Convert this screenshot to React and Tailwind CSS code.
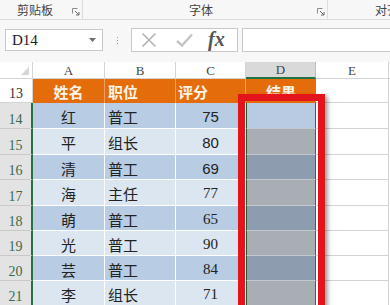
import React from "react";

const rows = [
  { n: 14, name: "红", pos: "普工", score: "75", h: "h-[26px]", blue: true, d: "bg-[#B8CBE3]", serif: false },
  { n: 15, name: "平", pos: "组长", score: "80", h: "h-[26px]", blue: false, d: "bg-[#A9AEB4]", serif: false },
  { n: 16, name: "清", pos: "普工", score: "69", h: "h-[25px]", blue: true, d: "bg-[#8E9CAF]", serif: false },
  { n: 17, name: "海", pos: "主任", score: "77", h: "h-[26px]", blue: false, d: "bg-[#A9AEB4]", serif: true },
  { n: 18, name: "萌", pos: "普工", score: "65", h: "h-[25px]", blue: true, d: "bg-[#8E9CAF]", serif: true },
  { n: 19, name: "光", pos: "普工", score: "90", h: "h-[25px]", blue: false, d: "bg-[#A9AEB4]", serif: true },
  { n: 20, name: "芸", pos: "普工", score: "84", h: "h-[25px]", blue: true, d: "bg-[#8E9CAF]", serif: true },
  { n: 21, name: "李", pos: "组长", score: "71", h: "h-[25px]", blue: false, d: "bg-[#A9AEB4]", serif: true },
];

function Launcher({ className = "" }) {
  return (
    <svg width="8" height="8" viewBox="0 0 8 8" className={className}>
      <path d="M0.5 0.5H5.5M0.5 0.5V5.5" stroke="#8A8A8A" strokeWidth="1" fill="none" />
      <path d="M3 3L7 7M7 4V7H4" stroke="#6A6A6A" strokeWidth="1" fill="none" />
    </svg>
  );
}

export default function App() {
  return (
    <div className="w-[390px] h-[305px] overflow-hidden relative bg-white font-['Noto_Sans_CJK_SC',sans-serif]">
      {/* Ribbon group labels */}
      <div className="h-[20px] flex bg-[#F7F7F7] border-b border-[#DCDCDC] text-[12px] text-[#444] leading-none whitespace-nowrap">
        <div className="w-[83px] flex items-center border-r border-[#DCDCDC] shrink-0">
          <span className="ml-[17px]">剪贴板</span>
          <Launcher className="ml-[19px] mt-[4px]" />
        </div>
        <div className="w-[245px] flex items-center border-r border-[#DCDCDC] shrink-0">
          <span className="ml-[106px]">字体</span>
          <Launcher className="ml-[104px] mt-[4px]" />
        </div>
        <div className="flex items-center shrink-0">
          <span className="ml-[47px] whitespace-nowrap">对齐</span>
        </div>
      </div>

      {/* Formula bar */}
      <div className="h-[42px] bg-[#F7F7F7] flex items-start pt-[8px]">
        <div className="ml-[5px] mt-[1px] w-[98px] h-[22px] bg-white border border-[#C8C8C8] flex items-center shrink-0">
          <span className="ml-[6px] text-[15px] text-[#222] font-['Liberation_Serif',serif] leading-none">D14</span>
          <svg width="7" height="4" viewBox="0 0 7 4" className="ml-auto mr-[6px]">
            <path d="M0 0H7L3.5 4Z" fill="#6E6E6E" />
          </svg>
        </div>
        <div className="ml-[14px] mt-[9px] flex flex-col gap-[2px] shrink-0">
          <div className="w-[1px] h-[1px] bg-[#9A9A9A]" />
          <div className="w-[1px] h-[1px] bg-[#9A9A9A]" />
          <div className="w-[1px] h-[1px] bg-[#9A9A9A]" />
        </div>
        <div className="ml-[13px] w-[107px] h-[24px] bg-white border border-[#C8C8C8] flex items-center shrink-0">
          <svg width="16" height="16" viewBox="0 0 16 16" className="ml-[9px]">
            <path d="M1.5 1.5L14.5 14.5M14.5 1.5L1.5 14.5" stroke="#B4B4B4" strokeWidth="1.6" fill="none" />
          </svg>
          <svg width="17" height="14" viewBox="0 0 17 14" className="ml-[19px]">
            <path d="M1 8L6 12.5L16 1.5" stroke="#C4C4C4" strokeWidth="2.4" fill="none" />
          </svg>
          <span className="ml-[15px] text-[20px] italic font-bold text-[#555] font-['Liberation_Serif',serif] leading-none -mt-[2px]">fx</span>
        </div>
        <div className="ml-[4px] flex-1 h-[24px] bg-white border border-r-0 border-[#C8C8C8]" />
      </div>

      {/* Column headers */}
      <div className="h-[17px] flex bg-white border-b border-[#D4D4D4] text-[13px] text-[#444] font-['Liberation_Serif',serif] leading-none">
        <div className="w-[33px] shrink-0 border-r border-[#D4D4D4] relative">
          <svg width="8" height="8" viewBox="0 0 8 8" className="absolute right-[3px] bottom-[3px]">
            <path d="M8 0V8H0Z" fill="#D6D6D6" />
          </svg>
        </div>
        <div className="w-[72px] shrink-0 border-r border-[#D4D4D4] flex items-center justify-center">A</div>
        <div className="w-[71px] shrink-0 border-r border-[#D4D4D4] flex items-center justify-center">B</div>
        <div className="w-[70px] shrink-0 border-r border-[#D4D4D4] flex items-center justify-center">C</div>
        <div className="w-[70px] shrink-0 border-r border-[#BDBDBD] bg-[#D9D9D9] flex items-center justify-center border-b-2 border-b-[#217346] -mb-[1px]">D</div>
        <div className="w-[73px] shrink-0 border-r border-[#D4D4D4] flex items-center justify-center">E</div>
        <div className="flex-1" />
      </div>

      {/* Row 13 header */}
      <div className="h-[24px] flex">
        <div className="w-[33px] shrink-0 bg-white border-r border-b border-[#D4D4D4] flex items-end justify-center pb-[1px] text-[14px] text-[#333] font-['Liberation_Serif',serif] leading-none">13</div>
        <div className="w-[72px] shrink-0 bg-[#E46C0A] border-r border-[#F2A060] flex items-center justify-center text-[15px] font-bold text-[#FFF4E8] leading-none">姓名</div>
        <div className="w-[71px] shrink-0 bg-[#E46C0A] border-r border-[#F2A060] flex items-center pl-[3px] text-[15px] font-bold text-[#FFF4E8] leading-none">职位</div>
        <div className="w-[70px] shrink-0 bg-[#E46C0A] border-r border-[#F2A060] flex items-center pl-[2px] text-[15px] font-bold text-[#FFF4E8] leading-none">评分</div>
        <div className="w-[70px] shrink-0 bg-[#E46C0A] flex items-center justify-center text-[15px] font-bold text-[#FFF4E8] leading-none">结果</div>
        <div className="w-[73px] shrink-0 border-r border-b border-[#D4D4D4]" />
        <div className="flex-1" />
      </div>

      {/* Data rows */}
      {rows.map((r) => {
        const bg = r.blue ? "bg-[#B8CCE4]" : "bg-[#DCE6F1]";
        const num = r.serif ? "font-['Liberation_Serif',serif]" : "font-['Liberation_Sans',sans-serif]";
        return (
          <div key={r.n} className={`${r.h} flex`}>
            <div className="w-[33px] shrink-0 bg-[#E3E3E3] border-b border-[#C9C9C9] border-r-2 border-r-[#217346] flex items-end justify-center pb-[1px] text-[14px] text-[#3A6A4C] font-['Liberation_Serif',serif] leading-none">
              {r.n}
            </div>
            <div className={`w-[72px] shrink-0 ${bg} border-r border-b border-white flex items-center justify-center pt-[2px] text-[15px] text-[#222] leading-none`}>{r.name}</div>
            <div className={`w-[71px] shrink-0 ${bg} border-r border-b border-white flex items-center pl-[3px] pt-[2px] text-[15px] text-[#222] leading-none`}>{r.pos}</div>
            <div className={`w-[70px] shrink-0 ${bg} border-r border-b border-white flex items-center justify-center pt-[2px] text-[15px] text-[#222] leading-none ${num}`}>{r.score}</div>
            <div className={`w-[70px] shrink-0 ${r.d} border-l border-r border-l-[#1D5E36] border-r-[#217346] border-b border-b-[#C3C8CE]`} />
            <div className="w-[73px] shrink-0 bg-white border-r border-b border-[#D4D4D4]" />
            <div className="flex-1" />
          </div>
        );
      })}

      {/* Red highlight box */}
      <div className="absolute left-[238px] top-[94px] w-[87px] h-[230px] border-[7px] border-[#E3141B] shadow-[3px_2px_4px_rgba(0,0,0,0.35)]" />
    </div>
  );
}
